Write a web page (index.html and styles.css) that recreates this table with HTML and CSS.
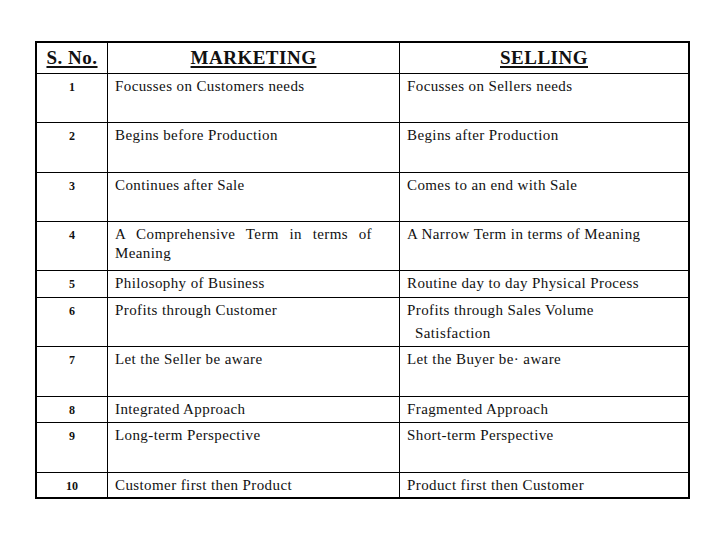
FILE: index.html
```html
<!DOCTYPE html>
<html lang="en">
<head>
<meta charset="utf-8">
<title>Marketing vs Selling</title>
<link rel="stylesheet" href="styles.css">
</head>
<body>
<div class="table">
  <div class="cell head num"><span>S. No.</span></div>
  <div class="cell head mk"><span>MARKETING</span></div>
  <div class="cell head sl"><span>SELLING</span></div>

  <div class="cell num">1</div>
  <div class="cell mk">Focusses on Customers needs</div>
  <div class="cell sl">Focusses on Sellers needs</div>

  <div class="cell num">2</div>
  <div class="cell mk">Begins before Production</div>
  <div class="cell sl">Begins after Production</div>

  <div class="cell num">3</div>
  <div class="cell mk">Continues after Sale</div>
  <div class="cell sl">Comes to an end with Sale</div>

  <div class="cell num">4</div>
  <div class="cell mk justify">A Comprehensive Term in terms of Meaning</div>
  <div class="cell sl">A Narrow Term in terms of Meaning</div>

  <div class="cell num">5</div>
  <div class="cell mk">Philosophy of Business</div>
  <div class="cell sl">Routine day to day Physical Process</div>

  <div class="cell num">6</div>
  <div class="cell mk">Profits through Customer</div>
  <div class="cell sl">Profits through Sales Volume<div class="cont">Satisfaction</div></div>

  <div class="cell num">7</div>
  <div class="cell mk">Let the Seller be aware</div>
  <div class="cell sl">Let the Buyer be&middot; aware</div>

  <div class="cell num">8</div>
  <div class="cell mk">Integrated Approach</div>
  <div class="cell sl">Fragmented Approach</div>

  <div class="cell num">9</div>
  <div class="cell mk">Long-term Perspective</div>
  <div class="cell sl">Short-term Perspective</div>

  <div class="cell num last">10</div>
  <div class="cell mk last">Customer first then Product</div>
  <div class="cell sl last">Product first then Customer</div>
</div>
</body>
</html>
```

FILE: styles.css
```css
html, body {
  margin: 0;
  padding: 0;
  background: #ffffff;
}

body {
  font-family: "Liberation Serif", "Times New Roman", serif;
  color: #111111;
}

.table {
  margin: 41px 0 0 35px;
  width: 655px;
  box-sizing: border-box;
  border: 2px solid #000000;
  display: grid;
  grid-template-columns: 71px 292px 1fr;
  grid-template-rows: 31px 49px 50px 49px 49px 27px 49px 50px 26px 50px 24px;
}

.cell {
  box-sizing: border-box;
  border-bottom: 1px solid #000000;
  font-size: 15px;
  line-height: 19px;
  letter-spacing: 0.4px;
  padding-top: 3px;
}

.cell.last {
  border-bottom: none;
}

.num {
  border-right: 1px solid #000000;
  text-align: center;
  font-weight: bold;
  font-size: 12px;
  letter-spacing: 0;
  padding-top: 4px;
}

.mk {
  border-right: 1px solid #000000;
  padding-left: 7px;
  padding-right: 27px;
}

.sl {
  padding-left: 7px;
  padding-right: 6px;
}

.justify {
  text-align: justify;
}

.cont {
  margin-top: 4px;
  padding-left: 8px;
}

.head {
  text-align: center;
  font-weight: bold;
  font-size: 19px;
  line-height: 22px;
  letter-spacing: 0.5px;
  padding: 4px 0 0 0;
}

.head span {
  text-decoration: underline;
  text-decoration-thickness: 1.5px;
  text-underline-offset: 2px;
}
```
